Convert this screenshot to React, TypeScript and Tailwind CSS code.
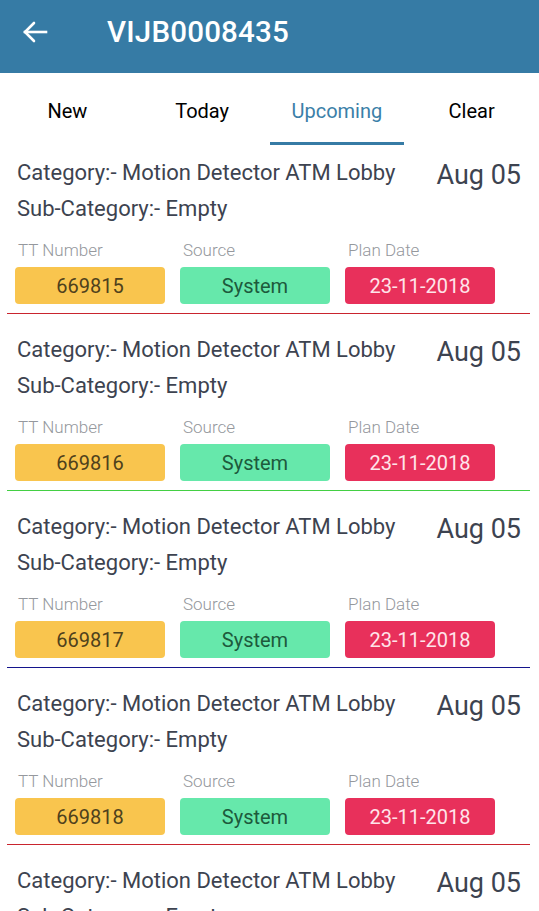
import React from "react";

const items = [
  { tt: "669815", line: "bg-[#c9242e]" },
  { tt: "669816", line: "bg-[#43cf43]" },
  { tt: "669817", line: "bg-[#14148c]" },
  { tt: "669818", line: "bg-[#c9242e]" },
  { tt: "669819", line: "bg-[#43cf43]" },
];

function BackArrow() {
  return (
    <svg width="26" height="24" viewBox="0 0 26 24" fill="none" stroke="white" strokeWidth="2.6" strokeLinecap="square">
      <path d="M3 12 H24" />
      <path d="M12 3 L3 12 L12 21" strokeLinecap="round" strokeLinejoin="miter" />
    </svg>
  );
}

export default function App() {
  const tabs = ["New", "Today", "Upcoming", "Clear"];
  return (
    <div className="w-[539px] h-[911px] overflow-hidden bg-white" style={{ fontFamily: "Roboto, 'Noto Sans', sans-serif" }}>
      <div className="h-[73px] bg-[#367ba5] flex items-center pb-[10px]">
        <div className="w-[107px] pl-[22px] flex items-center">
          <BackArrow />
        </div>
        <div className="text-white text-[29.5px] font-medium tracking-[0.2px] leading-[36px]">VIJB0008435</div>
      </div>
      <div className="h-[72px] flex">
        {tabs.map((t) => (
          <div key={t} className="flex-1 relative flex items-center justify-center pt-[3px]">
            <span className={`text-[20px] ${t === "Upcoming" ? "text-[#3b7fa8]" : "text-black"}`}>{t}</span>
            {t === "Upcoming" && <div className="absolute bottom-0 left-0 right-0 h-[3px] bg-[#367ba5]" />}
          </div>
        ))}
      </div>
      <div className="flex flex-col">
        {items.map((it, i) => (
          <div key={it.tt} className={i === 0 ? "pt-[10px]" : "pt-[18px]"}>
            <div className="px-[17px] flex justify-between">
              <div className="flex flex-col text-[22px] text-[#3d4350] leading-[36px]">
                <div>Category:- Motion Detector ATM Lobby</div>
                <div>Sub-Category:- Empty</div>
              </div>
              <div className="text-[27px] text-[#3d4350] leading-[40px] pr-[1px]">Aug 05</div>
            </div>
            <div className="mt-[13px] px-[15px] flex gap-[15px]">
              <div className="w-[150px] pl-[3px] text-[17px] font-light leading-[20px] text-[#95989d]">TT Number</div>
              <div className="w-[150px] pl-[3px] text-[17px] font-light leading-[20px] text-[#95989d]">Source</div>
              <div className="w-[150px] pl-[3px] text-[17px] font-light leading-[20px] text-[#95989d]">Plan Date</div>
            </div>
            <div className="mt-[7px] px-[15px] flex gap-[15px]">
              <div className="w-[150px] h-[37px] pt-[1px] rounded-[4px] bg-[#f9c54e] text-[#4f411c] text-[20px] flex items-center justify-center">{it.tt}</div>
              <div className="w-[150px] h-[37px] pt-[1px] rounded-[4px] bg-[#66e8ab] text-[#1d5a3c] text-[20px] flex items-center justify-center">System</div>
              <div className="w-[150px] h-[37px] pt-[1px] rounded-[4px] bg-[#e8305b] text-[#ffe4ea] text-[20px] flex items-center justify-center">23-11-2018</div>
            </div>
            <div className="mt-[9px] pl-[7px] pr-[9px]">
              <div className={`h-[1px] ${it.line}`} />
            </div>
          </div>
        ))}
      </div>
    </div>
  );
}
